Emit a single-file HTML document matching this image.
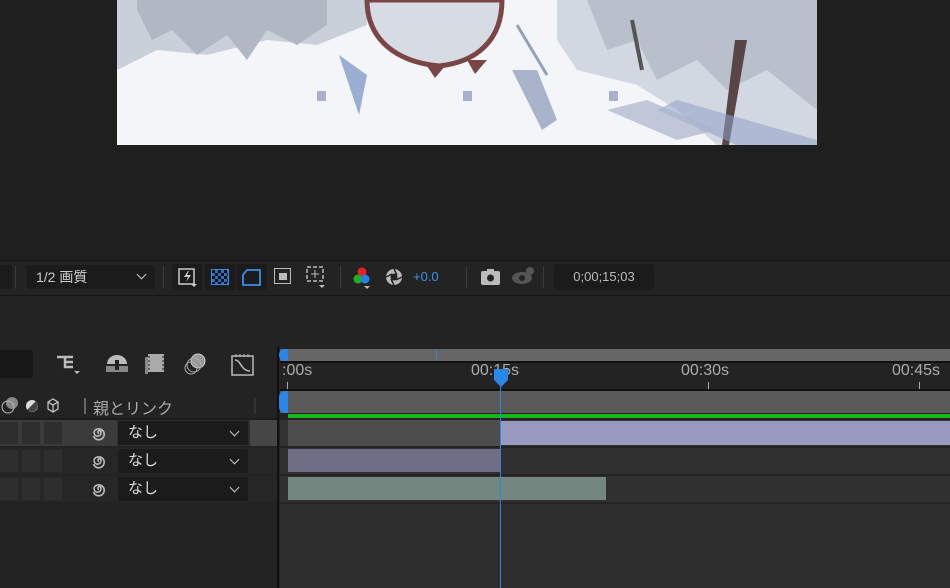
<!DOCTYPE html><html><head><meta charset="utf-8"><style>
body{margin:0;width:950px;height:588px;background:#1f1f1f;position:relative;overflow:hidden;font-family:"Liberation Sans","Noto Sans CJK JP",sans-serif;color:#c8c8c8}
.a{position:absolute}
.dd{position:absolute;left:118px;width:130px;height:24px;background:#1b1b1b;border-radius:2px;font-size:15px;color:#ddd;line-height:24px;text-indent:10px}
.dd:after{content:"";position:absolute;right:10px;top:7px;width:6px;height:6px;border-right:1.5px solid #ccc;border-bottom:1.5px solid #ccc;transform:rotate(45deg)}
.bx{position:absolute;width:18px;height:22px;background:#2e2e2e}
.sp{position:absolute;left:90px}
.tl{position:absolute;top:362px;font-size:16px;color:#aaa}
</style></head><body>
<!-- image -->
<svg class="a" style="left:117px;top:0" width="700" height="145">
<rect width="700" height="145" fill="#f4f5f8"/>
<path d="M0 0H250V25L200 45 150 40 90 55 40 50 0 70Z" fill="#c9d0da"/>
<path d="M20 10l15 30 20-10 25 25 30-20 20 25 20-30 30 15 30-20v-25H20Z" fill="#b0b8c4"/>
<path d="M440 0H700V145H600L560 110 520 85 460 70 440 40Z" fill="#d2d8e1"/>
<path d="M470 0l20 50 30-10 20 40 40-20 30 30 40-20 50 40V0Z" fill="#b8c0cc"/>
<path d="M515 20l10 50" stroke="#555" stroke-width="4"/>
<path d="M618 40L605 145H612L630 40Z" fill="#5a4545"/>
<path d="M560 100L700 140V145H620L540 110Z" fill="#8fa3c8" opacity=".55"/>
<path d="M395 70l30 60 15-10-20-50Z" fill="#a9b4ca"/>
<path d="M490 110l70 30 40-10-70-30Z" fill="#a9b4ca" opacity=".7"/>
<path d="M400 25L430 75" stroke="#6a7f9d" stroke-width="3" opacity=".7"/>
<path d="M222 55l20 60 8-40Z" fill="#5c7fb5" opacity=".6"/>
<path d="M250 0C250 40 280 62 322 66C360 62 385 40 385 0Z" fill="#d7dce4" stroke="#7a4545" stroke-width="5"/>
<path d="M310 66l8 12 10-12Z" fill="#7a4545"/><path d="M350 60l8 14 12-14Z" fill="#7a4545"/>
<rect x="200" y="91" width="9" height="10" fill="#aab0cc"/><rect x="346" y="91" width="9" height="10" fill="#aab0cc"/><rect x="492" y="91" width="9" height="10" fill="#aab0cc"/>
</svg>
<!-- toolbar -->
<div class="a" style="left:0;top:260px;width:950px;height:34px;background:#232323;border-top:1px solid #161616;border-bottom:2px solid #161616"></div>
<div class="a" style="left:0;top:265px;width:12px;height:24px;background:#1b1b1b"></div>
<div class="a" style="left:27px;top:265px;width:128px;height:24px;background:#1b1b1b;border-radius:2px;font-size:14px;color:#ccc;line-height:24px;text-indent:9px">1/2 画質</div>
<div class="a" style="left:138px;top:271px;width:6px;height:6px;border-right:1.5px solid #ccc;border-bottom:1.5px solid #ccc;transform:rotate(45deg)"></div>
<div class="a" style="left:172px;top:264px;width:30px;height:26px;background:#1b1b1b"></div>
<svg class="a" style="left:176px;top:266px" width="24" height="24"><rect x="3" y="3" width="15" height="15" fill="none" stroke="#ccc" stroke-width="1.5"/><path d="M12 5l-4 6h4l-2 5 5-7h-4l2-4z" fill="#ccc"/><path d="M15 18h6l-3 3z" fill="#ccc"/></svg>
<div class="a" style="left:205px;top:264px;width:30px;height:26px;background:#1b1b1b"></div>
<div class="a" style="left:211px;top:269px;width:18px;height:16px;background:repeating-conic-gradient(#2a6fc0 0 25%,#111 0 50%) 0 0/6px 6px;border:1.5px solid #3a8ee8;box-sizing:border-box"></div>
<div class="a" style="left:237px;top:264px;width:30px;height:26px;background:#1b1b1b"></div>
<svg class="a" style="left:240px;top:265px" width="24" height="24"><path d="M7 5H20V20H3V10Z" fill="none" stroke="#3a8ee8" stroke-width="1.8"/></svg>
<div class="a" style="left:274px;top:268px;width:15px;height:14px;border:1.5px solid #bbb"></div><div class="a" style="left:279px;top:273px;width:8px;height:7px;background:#bbb"></div>
<svg class="a" style="left:304px;top:264px" width="24" height="28"><rect x="3" y="3" width="16" height="14" fill="none" stroke="#bbb" stroke-width="1.5" stroke-dasharray="4 2"/><path d="M11 6V14M7 10H15" stroke="#bbb"/><path d="M15 21h6l-3 3z" fill="#bbb"/></svg>
<svg class="a" style="left:350px;top:264px" width="24" height="28"><circle cx="12" cy="8" r="4.5" fill="#e82020"/><circle cx="8" cy="15" r="4.5" fill="#20b020"/><circle cx="15" cy="15" r="4.5" fill="#2a7ee8"/><path d="M14 22h6l-3 3z" fill="#bbb"/></svg>
<svg class="a" style="left:383px;top:266px" width="22" height="22"><circle cx="11" cy="11" r="8" fill="#bbb"/><circle cx="11" cy="11" r="3.5" fill="#232323"/><path d="M11 3l3 6M19 11l-6 3M11 19l-3-6M3 11l6-3" stroke="#232323" stroke-width="1.5"/></svg>
<div class="a" style="left:413px;top:269px;font-size:13px;color:#3a8ee8">+0.0</div>
<svg class="a" style="left:479px;top:266px" width="24" height="22"><rect x="2" y="5" width="19" height="14" rx="2" fill="#bbb"/><rect x="8" y="3" width="7" height="3" fill="#bbb"/><circle cx="11.5" cy="12" r="3.5" fill="#232323"/></svg>
<svg class="a" style="left:510px;top:264px" width="26" height="24"><ellipse cx="12" cy="14" rx="10" ry="6" fill="#555"/><circle cx="12" cy="14" r="3" fill="#232323"/><circle cx="20" cy="7" r="4" fill="#555"/></svg>
<div class="a" style="left:554px;top:264px;width:100px;height:26px;background:#1b1b1b;border-radius:3px;font-size:13px;color:#bbb;line-height:26px;text-align:center">0;00;15;03</div>
<div class="a" style="left:15px;top:266px;width:1px;height:22px;background:#3a3a3a"></div>
<div class="a" style="left:163px;top:266px;width:1px;height:22px;background:#3a3a3a"></div>
<div class="a" style="left:340px;top:266px;width:1px;height:22px;background:#3a3a3a"></div>
<div class="a" style="left:466px;top:266px;width:1px;height:22px;background:#3a3a3a"></div>
<div class="a" style="left:543px;top:266px;width:1px;height:22px;background:#3a3a3a"></div>
<!-- timeline panel -->
<div class="a" style="left:0;top:296px;width:950px;height:292px;background:#232323"></div>
<div class="a" style="left:0;top:350px;width:33px;height:28px;background:#171717;border-radius:0 4px 4px 0"></div>
<svg class="a" style="left:54px;top:352px" width="28" height="24"><path d="M3 5h8M11 5v10h8M11 10h8M11 5h8" stroke="#bbb" stroke-width="2.5" fill="none"/><path d="M20 19h6l-3 3z" fill="#bbb"/></svg>
<svg class="a" style="left:104px;top:352px" width="26" height="22"><path d="M3 12a10 9 0 0 1 20 0Z" fill="#bbb"/><rect x="2" y="14" width="22" height="6" fill="#888"/><rect x="11" y="8" width="4" height="10" fill="#232323"/></svg>
<svg class="a" style="left:144px;top:352px" width="22" height="24"><rect x="4" y="2" width="16" height="18" fill="#aaa"/><path d="M5 4v14M19 4v14" stroke="#232323" stroke-dasharray="2 2"/><rect x="1" y="5" width="3" height="17" fill="#888"/></svg>
<svg class="a" style="left:182px;top:352px" width="26" height="24"><circle cx="16" cy="9" r="7" fill="#999" stroke="#ccc"/><circle cx="12" cy="13" r="7" fill="none" stroke="#aaa"/><circle cx="9" cy="16" r="6" fill="none" stroke="#aaa"/></svg>
<svg class="a" style="left:230px;top:352px" width="26" height="26"><rect x="2" y="4" width="21" height="19" fill="none" stroke="#bbb" stroke-width="1.5"/><path d="M5 8c6 0 6 11 15 11" stroke="#bbb" fill="none" stroke-width="1.5"/><path d="M6 2v3M10 2v3M14 2v3M18 2v3" stroke="#bbb"/></svg>
<!-- header row -->
<div class="a" style="left:0;top:392px;width:278px;height:26px;background:#232323;border-bottom:2px solid #1b1b1b"></div>
<svg class="a" style="left:0;top:396px" width="70" height="20"><circle cx="12" cy="7" r="6" fill="#888"/><circle cx="8" cy="11" r="6" fill="none" stroke="#bbb"/><circle cx="32" cy="10" r="6" fill="#ddd"/><path d="M27 14a6 6 0 0 0 9-9Z" fill="#444"/><path d="M48 6l5-3 5 3v7l-5 3-5-3zM48 6l5 3 5-3M53 9v7" stroke="#ccc" fill="none" stroke-width="1.2"/></svg>
<div class="a" style="left:84px;top:398px;width:2px;height:16px;background:#666"></div>
<div class="a" style="left:93px;top:395px;font-size:16px;color:#aaa">親とリンク</div>
<div class="a" style="left:254px;top:398px;width:2px;height:16px;background:#333"></div>
<!-- left rows -->
<div class="a" style="left:0;top:420px;width:278px;height:26px;background:#2e2e2e"></div>
<div class="a" style="left:0;top:420px;width:117px;height:26px;background:#3b3b3b"></div>
<div class="a" style="left:250px;top:420px;width:28px;height:26px;background:#464646"></div>
<div class="a" style="left:0;top:448px;width:278px;height:26px;background:#262626"></div>
<div class="a" style="left:0;top:476px;width:278px;height:26px;background:#262626"></div>
<div class="bx" style="left:0;top:422px"></div><div class="bx" style="left:22px;top:422px"></div><div class="bx" style="left:44px;top:422px"></div>
<div class="bx" style="left:0;top:450px"></div><div class="bx" style="left:22px;top:450px"></div><div class="bx" style="left:44px;top:450px"></div>
<div class="bx" style="left:0;top:478px"></div><div class="bx" style="left:22px;top:478px"></div><div class="bx" style="left:44px;top:478px"></div>
<svg class="sp" style="top:424px" width="18" height="18"><path d="M9 9.5a1.5 1.5 0 1 1 2-1.5 3.5 3.5 0 1 1-5-2.5A5.5 5.5 0 1 1 3.5 12" fill="none" stroke="#bbb" stroke-width="1.6"/></svg>
<svg class="sp" style="top:452px" width="18" height="18"><path d="M9 9.5a1.5 1.5 0 1 1 2-1.5 3.5 3.5 0 1 1-5-2.5A5.5 5.5 0 1 1 3.5 12" fill="none" stroke="#bbb" stroke-width="1.6"/></svg>
<svg class="sp" style="top:480px" width="18" height="18"><path d="M9 9.5a1.5 1.5 0 1 1 2-1.5 3.5 3.5 0 1 1-5-2.5A5.5 5.5 0 1 1 3.5 12" fill="none" stroke="#bbb" stroke-width="1.6"/></svg>
<div class="dd" style="top:421px">なし</div><div class="dd" style="top:449px">なし</div><div class="dd" style="top:477px">なし</div>
<!-- divider -->
<div class="a" style="left:277px;top:346px;width:2px;height:242px;background:#111"></div>
<!-- right side -->
<div class="a" style="left:280px;top:349px;width:670px;height:12px;background:#666;border-bottom:2px solid #111"></div>
<div class="a" style="left:279px;top:349px;width:9px;height:12px;background:#2a86e8;border-radius:6px 0 0 6px"></div>
<div class="a" style="left:436px;top:350px;width:1px;height:10px;background:#2a86e8"></div>
<div class="tl" style="left:282px">:00s</div><div class="tl" style="left:471px">00:15s</div><div class="tl" style="left:681px">00:30s</div><div class="tl" style="left:892px">00:45s</div>
<div class="a" style="left:708px;top:382px;width:1px;height:7px;background:#aaa"></div>
<div class="a" style="left:919px;top:382px;width:1px;height:7px;background:#aaa"></div>
<div class="a" style="left:287px;top:382px;width:1px;height:7px;background:#aaa"></div>
<div class="a" style="left:280px;top:389px;width:670px;height:2px;background:#111"></div>
<div class="a" style="left:280px;top:391px;width:670px;height:22px;background:#5a5a5a"></div>
<div class="a" style="left:279px;top:391px;width:9px;height:22px;background:#2a86e8;border-radius:6px 0 0 6px"></div>
<div class="a" style="left:288px;top:414px;width:662px;height:4px;background:#18b818"></div>
<div class="a" style="left:280px;top:420px;width:670px;height:26px;background:#333"></div>
<div class="a" style="left:288px;top:420px;width:213px;height:26px;background:#4d4d4d"></div>
<div class="a" style="left:501px;top:421px;width:449px;height:24px;background:#9a9ac0"></div>
<div class="a" style="left:280px;top:448px;width:670px;height:26px;background:#303030"></div>
<div class="a" style="left:288px;top:449px;width:212px;height:23px;background:#6f6e86"></div>
<div class="a" style="left:280px;top:476px;width:670px;height:26px;background:#303030"></div>
<div class="a" style="left:288px;top:477px;width:318px;height:23px;background:#738680"></div>
<div class="a" style="left:280px;top:504px;width:670px;height:84px;background:#2d2d2d"></div>
<!-- playhead -->
<div class="a" style="left:500px;top:374px;width:1px;height:214px;background:#2a86e8"></div>
<svg class="a" style="left:493px;top:368px" width="16" height="20"><path d="M1 1H15V12L8 19 1 12Z" fill="#2a86e8"/></svg>
</body></html>
